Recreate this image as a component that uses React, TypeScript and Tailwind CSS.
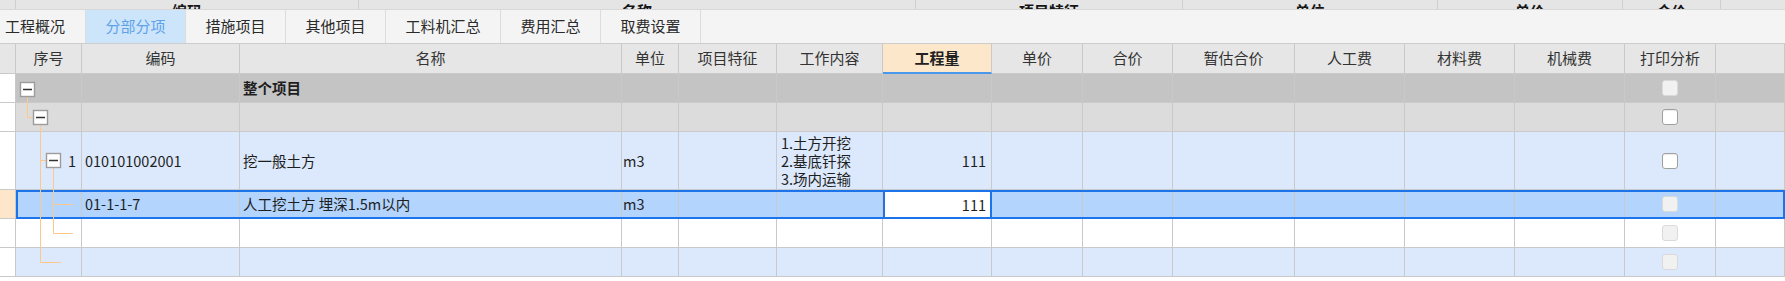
import React from "react";

const GRID =
  "grid grid-cols-[16px_66px_158px_382px_57px_98px_106px_109px_91px_90px_122px_110px_110px_110px_91px_69px]";

const CELL = "border-r border-b border-[#c9c9c9] flex items-center overflow-hidden whitespace-nowrap";

const ALIGN = [
  "",
  "pl-[3px]",
  "pl-[3px]",
  "pl-[1px]",
  "",
  "pl-[4px]",
  "justify-end pr-[5px]",
  "",
  "",
  "",
  "",
  "",
  "",
  "justify-center",
  "",
];

function Box({ on }: { on: boolean }) {
  return on ? (
    <div className="w-[16px] h-[16px] rounded-[3px] border border-[#a0a0a0] bg-white shadow-[inset_0_1px_1px_rgba(0,0,0,0.08)]" />
  ) : (
    <div className="w-[16px] h-[16px] rounded-[3px] border border-[#dadada] bg-[#f1f1f1]" />
  );
}

type RowProps = {
  h: string;
  bg: string;
  lead: string;
  cells: React.ReactNode[];
  overrides?: Record<number, string>;
};

function Row({ h, bg, lead, cells, overrides = {} }: RowProps) {
  return (
    <div className={`${GRID} ${h}`}>
      <div className={`${CELL} ${lead}`} />
      {cells.map((c, i) => (
        <div key={i} className={overrides[i] ?? `${CELL} ${bg} ${ALIGN[i]}`}>
          {c}
        </div>
      ))}
    </div>
  );
}

const empty = (n: number) => Array.from({ length: n }, () => null as React.ReactNode);

export default function App() {
  const headers = [
    "序号",
    "编码",
    "名称",
    "单位",
    "项目特征",
    "工作内容",
    "工程量",
    "单价",
    "合价",
    "暂估合价",
    "人工费",
    "材料费",
    "机械费",
    "打印分析",
    "",
  ];

  const strip = [
    { w: "w-[16px]", t: "" },
    { w: "w-[343px]", t: "编码" },
    { w: "w-[557px]", t: "名称" },
    { w: "w-[267px]", t: "项目特征" },
    { w: "w-[255px]", t: "单位" },
    { w: "w-[185px]", t: "单价" },
    { w: "w-[98px]", t: "合价" },
  ];

  const tabs = [
    { t: "工程概况", w: "w-[86px] justify-end pr-[20px]", sel: false },
    { t: "分部分项", w: "w-[100px] justify-center", sel: true },
    { t: "措施项目", w: "w-[100px] justify-center", sel: false },
    { t: "其他项目", w: "w-[100px] justify-center", sel: false },
    { t: "工料机汇总", w: "w-[115px] justify-center", sel: false },
    { t: "费用汇总", w: "w-[100px] justify-center", sel: false },
    { t: "取费设置", w: "w-[100px] justify-center", sel: false },
  ];

  const r1 = empty(15);
  r1[2] = <span className="font-bold">整个项目</span>;
  r1[13] = <Box on={false} />;

  const r2 = empty(15);
  r2[13] = <Box on={true} />;

  const r3 = empty(15);
  r3[0] = <span className="pl-[52px]">1</span>;
  r3[1] = "010101002001";
  r3[2] = "挖一般土方";
  r3[3] = "m3";
  r3[5] = (
    <div className="flex flex-col leading-[18px]">
      <span>1.土方开挖</span>
      <span>2.基底钎探</span>
      <span>3.场内运输</span>
    </div>
  );
  r3[6] = "111";
  r3[13] = <Box on={true} />;

  const r4 = empty(15);
  r4[1] = "01-1-1-7";
  r4[2] = "人工挖土方 埋深1.5m以内";
  r4[3] = "m3";
  r4[6] = "111";
  r4[13] = <Box on={false} />;

  const r5 = empty(15);
  r5[13] = <Box on={false} />;
  const r6 = empty(15);
  r6[13] = <Box on={false} />;

  return (
    <div className="relative w-[1785px] h-[281px] overflow-hidden bg-white font-['Noto_Sans_CJK_SC',sans-serif] text-[#1e1e1e]">
      {/* top strip (bottom edge of an upper table's header) */}
      <div className="flex h-[10px] bg-[#e5e5e5] border-b border-[#d8d8d8]">
        {strip.map((s, i) => (
          <div
            key={i}
            className={`${s.w} h-[9px] border-r border-[#cfcfcf] overflow-hidden flex items-end justify-center`}
          >
            <span className="text-[15px] leading-[15px] mb-[-9px] font-bold text-[#151515]">{s.t}</span>
          </div>
        ))}
        <div className="flex-1" />
      </div>

      {/* tabs */}
      <div className="flex h-[34px] bg-[#f4f4f4] border-b border-[#cdcdcd]">
        {tabs.map((t, i) => (
          <div
            key={i}
            className={`${t.w} flex items-center border-r border-[#dcdcdc] text-[15px] ${
              t.sel ? "bg-[#cde5fa] text-[#5ea2ea]" : "text-[#2a2a2a]"
            }`}
          >
            {t.t}
          </div>
        ))}
        <div className="flex-1" />
      </div>

      {/* header */}
      <div className={`${GRID} h-[30px] bg-[#e6e6e6] text-[15px] text-[#333]`}>
        <div className={CELL} />
        {headers.map((h, i) =>
          i === 6 ? (
            <div
              key={i}
              className="border-r border-[#c9c9c9] border-b-2 border-b-[#4a97ee] bg-[#fde7cb] flex items-center justify-center font-bold text-[#222]"
            >
              {h}
            </div>
          ) : (
            <div key={i} className={`${CELL} justify-center`}>
              {h}
            </div>
          )
        )}
      </div>

      {/* body */}
      <div className="text-[14.5px] leading-[18px]">
        <Row h="h-[29px]" bg="bg-[#c4c4c4]" lead="bg-white" cells={r1} />
        <Row h="h-[29px]" bg="bg-[#dcdcdc]" lead="bg-white" cells={r2} />
        <Row h="h-[58px]" bg="bg-[#dce9fc]" lead="bg-white" cells={r3} />
        <div className="relative">
          <Row
            h="h-[29px]"
            bg="bg-[#b3d4fc]"
            lead="bg-[#fde6c9]"
            cells={r4}
            overrides={{
              6: "border-2 border-[#1c74ec] bg-white flex items-center justify-end pr-[4px]",
            }}
          />
          <div className="pointer-events-none absolute left-[16px] right-0 top-0 bottom-0 border-2 border-[#1c74ec]" />
        </div>
        <Row h="h-[29px]" bg="bg-white" lead="bg-white" cells={r5} />
        <Row h="h-[29px]" bg="bg-[#dce9fc]" lead="bg-white" cells={r6} />
      </div>

      {/* tree lines */}
      <svg className="pointer-events-none absolute left-0 top-0" width="90" height="281">
        <g stroke="#fcc88c" strokeWidth="1" fill="none">
          <path d="M27.5 96 V117.5 H33" />
          <path d="M40.5 124 V262.5 H61" />
          <path d="M40.5 160.5 H46" />
          <path d="M53.5 168 V233.5 H73" />
          <path d="M53.5 204.5 H73" />
        </g>
        {[
          [27.5, 89.5],
          [40.5, 117.5],
          [53.5, 160.5],
        ].map(([cx, cy], i) => (
          <g key={i}>
            <rect
              x={cx - 7}
              y={cy - 7}
              width="14"
              height="14"
              fill="#ffffff"
              stroke="#9c9c9c"
              strokeWidth="1.4"
            />
            <line x1={cx - 4.5} y1={cy} x2={cx + 4.5} y2={cy} stroke="#333" strokeWidth="1.5" />
          </g>
        ))}
      </svg>
    </div>
  );
}
